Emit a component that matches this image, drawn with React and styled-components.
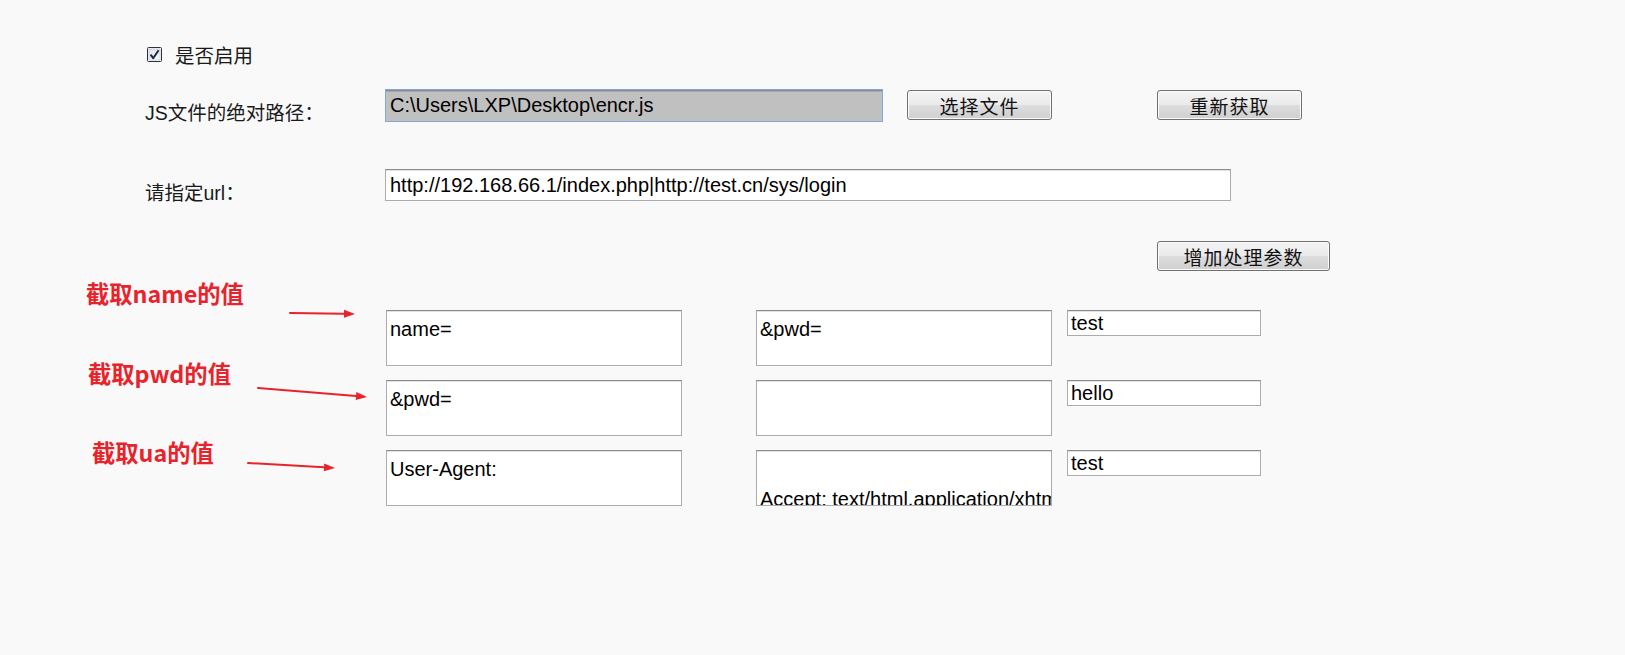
import React from "react";
import styled, { createGlobalStyle } from "styled-components";

const GlobalStyle = createGlobalStyle`
  html, body {
    margin: 0;
    padding: 0;
    background: #f9f9f9;
  }
  body {
    font-family: "Liberation Sans", "Noto Sans CJK SC", sans-serif;
    color: #1a1a1a;
  }
`;

const params = [
  { left: "name=", right: "&pwd=", value: "test" },
  { left: "&pwd=", right: "", value: "hello" },
  {
    left: "User-Agent:",
    right:
      "\nAccept: text/html,application/xhtml+xml,application/xml;q=0.9,*/*;q=0.8",
    value: "test",
    scrolled: true,
  },
];

const notes = [
  { text: "截取name的值", x: 86, y: 279, arrow: [290, 313, 355, 314] },
  { text: "截取pwd的值", x: 88, y: 359, arrow: [258, 388, 367, 397] },
  { text: "截取ua的值", x: 92, y: 438, arrow: [248, 463, 335, 468] },
];

const Arrow = ({ from }) => {
  const [x1, y1, x2, y2] = from;
  const ang = Math.atan2(y2 - y1, x2 - x1);
  const len = 11;
  const w = 4;
  const bx = x2 - len * Math.cos(ang);
  const by = y2 - len * Math.sin(ang);
  const px = -Math.sin(ang) * w;
  const py = Math.cos(ang) * w;
  return (
    <g>
      <line
        x1={x1}
        y1={y1}
        x2={bx}
        y2={by}
        stroke="#e8232b"
        strokeWidth="2"
        strokeLinecap="round"
      />
      <polygon
        points={`${x2},${y2} ${bx + px},${by + py} ${bx - px},${by - py}`}
        fill="#e8232b"
      />
    </g>
  );
};

const CheckIcon = () => (
  <svg width="15" height="15" viewBox="0 0 15 15">
    <defs>
      <linearGradient id="cb" x1="0" y1="0" x2="1" y2="1">
        <stop offset="0" stopColor="#dfe3ea" />
        <stop offset="1" stopColor="#f8f9fb" />
      </linearGradient>
    </defs>
    <rect x="0.5" y="0.5" width="14" height="14" rx="1" fill="#f3f4f6" stroke="#2d3138" />
    <rect x="2" y="2" width="11" height="11" fill="url(#cb)" stroke="#b7bcc6" strokeWidth="0.5" />
    <path
      d="M3.6 7.6 L6.2 11.2 L11.6 3.2"
      fill="none"
      stroke="#1d2746"
      strokeWidth="2"
      strokeLinejoin="round"
    />
  </svg>
);

const App = () => {
  return (
    <Page>
      <GlobalStyle />
      <Form>
        <CheckRow>
          <CheckIcon />
          <CheckText>是否启用</CheckText>
        </CheckRow>

        <Row $top={27}>
          <Label $offset={14}>JS文件的绝对路径：</Label>
          <Controls>
            <PathInput readOnly value={"C:\\Users\\LXP\\Desktop\\encr.js"} />
            <Button $width={145} $ml={24}>选择文件</Button>
            <Button $width={145} $ml={105}>重新获取</Button>
          </Controls>
        </Row>

        <Row $top={47}>
          <Label $offset={14}>请指定url：</Label>
          <UrlInput
            readOnly
            value="http://192.168.66.1/index.php|http://test.cn/sys/login"
          />
        </Row>

        <Row $top={39}>
          <span />
          <Controls>
            <Button $width={173} $ml={772}>增加处理参数</Button>
          </Controls>
        </Row>

        <ParamList>
          {params.map((p, i) => (
            <Row key={i}>
              <span />
              <ParamCells>
                <TextBox readOnly value={p.left} />
                <TextBox readOnly value={p.right} wrap="off" $scrolled={p.scrolled} />
                <SmallInput readOnly value={p.value} />
              </ParamCells>
            </Row>
          ))}
        </ParamList>
      </Form>

      <Notes>
        {notes.map((n, i) => (
          <Note key={i} style={{ left: n.x, top: n.y }}>
            {n.text}
          </Note>
        ))}
        <ArrowLayer width="420" height="520">
          {notes.map((n, i) => (
            <Arrow key={i} from={n.arrow} />
          ))}
        </ArrowLayer>
      </Notes>
    </Page>
  );
};

export default App;

const Page = styled.div`
  position: relative;
  width: 1625px;
  height: 655px;
  background: #f9f9f9;
  overflow: hidden;
`;

const Form = styled.div`
  display: flex;
  flex-direction: column;
  padding: 47px 0 0 145px;
`;

const CheckRow = styled.div`
  display: flex;
  align-items: center;
  height: 15px;
  padding-left: 2px;
  gap: 13px;
`;

const CheckText = styled.span`
  font-family: "Noto Sans CJK SC", sans-serif;
  font-size: 19.5px;
  line-height: 20px;
  color: #1a1a1a;
`;

const Row = styled.div`
  display: grid;
  grid-template-columns: 240px 1fr;
  align-items: start;
  margin-top: ${(p) => p.$top || 0}px;
`;

/* label sits a little below the field's centre, without growing the row */
const Label = styled.span`
  font-size: 19.5px;
  line-height: 20px;
  padding-top: ${(p) => p.$offset || 0}px;
  margin-bottom: -${(p) => p.$offset || 0}px;
  color: #1a1a1a;
  white-space: nowrap;
`;

const Controls = styled.div`
  display: flex;
  align-items: flex-start;
`;

const Field = styled.input`
  box-sizing: border-box;
  font-family: "Liberation Sans", Arial, sans-serif;
  font-size: 20px;
  color: #000;
  padding: 0 4px;
  margin: 0;
  outline: none;
  border: 1px solid #acacac;
  border-top-color: #8c8c8c;
  box-shadow: inset 0 1px 0 #e2e2e2;
  background: #fff;
`;

const PathInput = styled(Field)`
  width: 498px;
  height: 33px;
  background: #c0c0c0;
  border: 1px solid #7fa9dc;
  box-shadow: inset 0 1px 0 #8a8a8a, inset 0 2px 0 #a8a8a8;
`;

const UrlInput = styled(Field)`
  width: 846px;
  height: 32px;
`;

const SmallInput = styled(Field)`
  width: 194px;
  height: 26px;
  padding: 0 3px;
`;

const Button = styled.button`
  box-sizing: border-box;
  width: ${(p) => p.$width}px;
  height: 30px;
  margin: 1px 0 0 ${(p) => p.$ml || 0}px;
  padding: 0;
  border: 1px solid #707070;
  border-radius: 3px;
  background: linear-gradient(#f3f3f3 0%, #ebebeb 48%, #dddddd 52%, #cfcfcf 100%);
  box-shadow: inset 0 0 0 1px #fbfbfb;
  font-family: "Noto Sans CJK SC", sans-serif;
  font-size: 19px;
  line-height: 19px;
  color: #111;
  letter-spacing: 1px;
`;

const ParamList = styled.div`
  display: flex;
  flex-direction: column;
  gap: 14px;
  margin-top: 39px;
`;

const ParamCells = styled.div`
  display: flex;
  align-items: flex-start;
  padding-left: 1px;
`;

const TextBox = styled.textarea`
  box-sizing: border-box;
  width: 296px;
  height: 56px;
  margin: 0;
  resize: none;
  overflow: hidden;
  outline: none;
  font-family: "Liberation Sans", Arial, sans-serif;
  font-size: 20px;
  line-height: 23px;
  color: #000;
  padding: ${(p) => (p.$scrolled ? "14px" : "7px")} 3px 0 3px;
  border: 1px solid #acacac;
  border-top-color: #8c8c8c;
  box-shadow: inset 0 1px 0 #e2e2e2;
  background: #fff;
  white-space: pre;

  & + & {
    margin-left: 74px;
  }

  & + input {
    margin-left: 15px;
  }
`;

const Notes = styled.div`
  position: absolute;
  inset: 0;
  pointer-events: none;
`;

const Note = styled.span`
  position: absolute;
  font-family: "Noto Sans CJK SC", sans-serif;
  font-weight: 700;
  font-size: 23.3px;
  line-height: 28px;
  color: #e8232b;
  white-space: nowrap;
`;

const ArrowLayer = styled.svg`
  position: absolute;
  left: 0;
  top: 0;
`;
